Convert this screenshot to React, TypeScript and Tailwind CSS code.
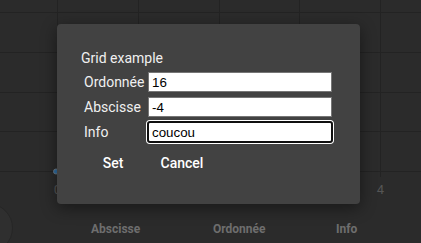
import { useState } from 'react';

const xTicks = [57.5, 138.5, 219.5, 299.5, 380.5];
const yTicks = [12.5, 52.5, 92.5, 131.5, 171.5];

function Chart() {
  return (
    <svg width="421" height="206" className="block">
      {yTicks.map((y) => (
        <line key={y} x1="0" x2="421" y1={y} y2={y} stroke="#232323" strokeWidth="1" />
      ))}
      {xTicks.map((x) => (
        <line key={x} x1={x} x2={x} y1="0" y2="177" stroke="#232323" strokeWidth="1" />
      ))}
      {['0', '1', '2', '3', '4'].map((t, i) => (
        <text
          key={t}
          x={xTicks[i]}
          y="194"
          textAnchor="middle"
          fontSize="13"
          fill="#555555"
          fontFamily="Roboto, sans-serif"
        >
          {t}
        </text>
      ))}
      <circle cx="56" cy="171.5" r="2.5" fill="#2f6ea3" stroke="#6b7a88" strokeWidth="1" />
    </svg>
  );
}

export default function App() {
  const [ordonnee, setOrdonnee] = useState('16');
  const [abscisse, setAbscisse] = useState('-4');
  const [info, setInfo] = useState('coucou');

  const inputCls =
    "w-[184px] h-[20px] px-[3px] bg-white text-black border border-[#767676] font-['Liberation_Sans',sans-serif] text-[13.33px] outline-none";

  return (
    <div className="relative w-[421px] h-[243px] overflow-hidden bg-[#2b2b2b] font-['Roboto',sans-serif]">
      <Chart />

      {/* table header */}
      <div className="grid grid-cols-[122px_123px_1fr] pl-[91px] pt-[14px] text-[12px] font-bold text-[#6e6e6e]">
        <span>Abscisse</span>
        <span>Ordonnée</span>
        <span>Info</span>
      </div>

      {/* fab behind the dialog */}
      <div className="absolute left-[-37px] top-[203px] w-[50px] h-[50px] rounded-full bg-[#2f2f2f] border border-[#262626]" />

      {/* Dialog */}
      <div className="absolute left-[57px] top-[24px] w-[303px] h-[180px] rounded-[4px] bg-[#424242] shadow-[0_4px_16px_rgba(0,0,0,0.45)] pl-[24px] pt-[26px] text-[#f0f0f0]">
        <div className="text-[14px] leading-[16px] h-[16px]">Grid example</div>

        <div className="mt-[6px] flex flex-col gap-[5px] pl-[3px] text-[14px]">
          <div className="flex items-center h-[20px]">
            <label className="w-[64px]">Ordonnée</label>
            <input className={inputCls} value={ordonnee} onChange={(e) => setOrdonnee(e.target.value)} />
          </div>
          <div className="flex items-center h-[20px]">
            <label className="w-[64px]">Abscisse</label>
            <input className={inputCls} value={abscisse} onChange={(e) => setAbscisse(e.target.value)} />
          </div>
          <div className="flex items-center h-[20px]">
            <label className="w-[64px]">Info</label>
            <input
              className="w-[186px] h-[22px] -ml-px px-[3px] bg-white text-black border-2 border-[#101010] rounded-[3px] shadow-[0_0_0_1px_#ffffff] font-['Liberation_Sans',sans-serif] text-[13.33px] outline-none"
              value={info}
              onChange={(e) => setInfo(e.target.value)}
            />
          </div>
        </div>

        <div className="mt-[3px] flex items-center h-[36px]">
          <button className="min-w-[64px] h-[36px] px-2 text-[14px] font-medium text-white">Set</button>
          <button className="ml-[5px] min-w-[64px] h-[36px] px-2 text-[14px] font-medium text-white">Cancel</button>
        </div>
      </div>
    </div>
  );
}
